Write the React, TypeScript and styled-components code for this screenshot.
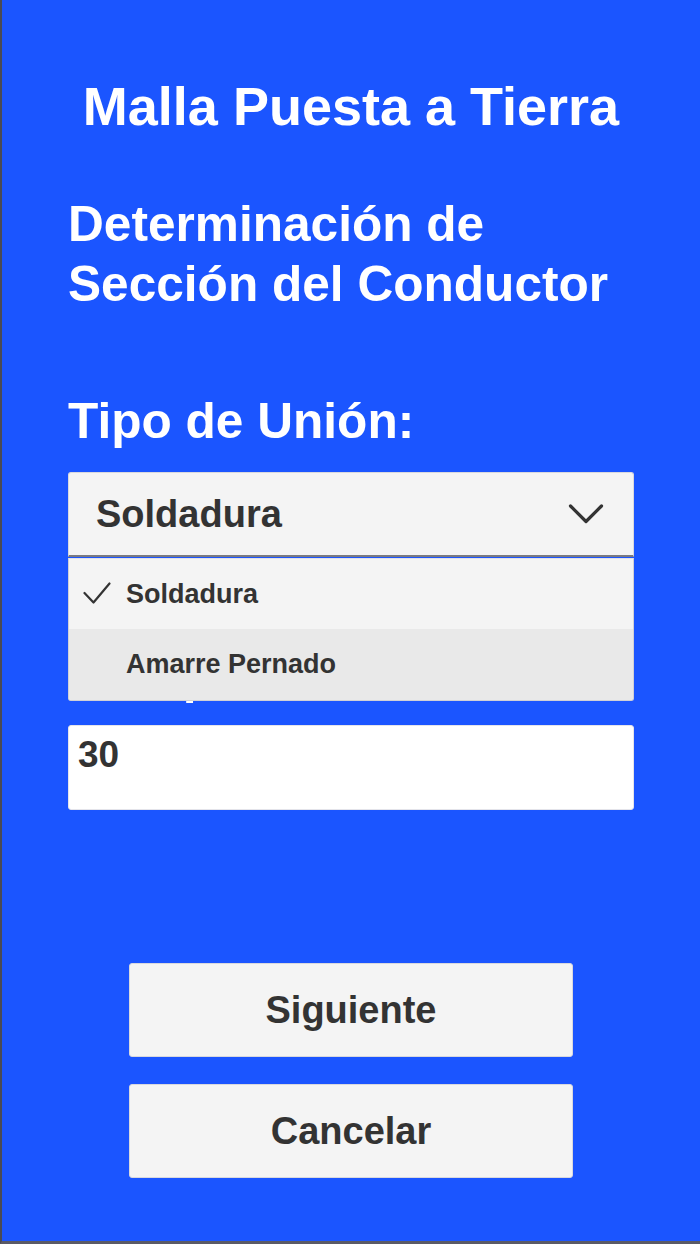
import React from "react";
import styled, { createGlobalStyle } from "styled-components";

const Global = createGlobalStyle`
  html, body { margin: 0; padding: 0; }
  body { font-family: "Liberation Sans", Arial, sans-serif; }
  * { box-sizing: border-box; }
`;

const Screen = styled.div`
  width: 700px;
  height: 1244px;
  background: #1b55ff;
  border-left: 2px solid #4a4a55;
  border-bottom: 3px solid #5a5a66;
  padding: 76px 66px 0 66px;
  display: flex;
  flex-direction: column;
  font-family: "Liberation Sans", Arial, sans-serif;
  font-weight: 700;
  overflow: hidden;
`;

const Title = styled.h1`
  margin: 0;
  font-size: 54px;
  line-height: 61px;
  color: #fff;
  text-align: center;
  font-weight: 700;
  white-space: nowrap;
`;

const Heading = styled.h2`
  margin: 57px 0 0 0;
  font-size: 49.6px;
  line-height: 60px;
  color: #fff;
  font-weight: 700;
`;

const Label = styled.div<{ $mt: number }>`
  margin-top: ${(p) => p.$mt}px;
  font-size: 49.6px;
  line-height: 60px;
  color: #fff;
  white-space: nowrap;
`;

const SelectWrap = styled.div`
  position: relative;
  margin-top: 21px;
`;

const SelectBox = styled.div`
  height: 85px;
  background: #f4f4f4;
  border: 1px solid #d8d8de;
  border-bottom: 2px solid #7a7a82;
  border-radius: 3px 3px 0 0;
  display: flex;
  align-items: center;
  justify-content: space-between;
  padding: 0 29px 0 27px;
  font-size: 38px;
  color: #333;
`;

const Menu = styled.div`
  position: absolute;
  left: 0;
  right: 0;
  top: 86px;
  background: #f4f4f4;
  border: 1px solid #d0d0d6;
  border-top: 1px solid #e2e2e6;
  border-radius: 0 0 3px 3px;
  overflow: hidden;
  z-index: 2;
`;

const Option = styled.div<{ $active?: boolean; $h: number }>`
  height: ${(p) => p.$h}px;
  display: flex;
  align-items: center;
  padding-left: 14px;
  font-size: 27px;
  color: #333;
  background: ${(p) => (p.$active ? "#e9e9e9" : "#f4f4f4")};
`;

const CheckSlot = styled.span`
  width: 43px;
  display: flex;
  align-items: center;
`;

const ValueField = styled.div`
  margin-top: 19px;
  height: 85px;
  background: #fff;
  border: 1px solid #e4e4ea;
  border-radius: 3px;
  padding: 8px 0 0 9px;
  font-size: 37px;
  line-height: 42px;
  color: #333;
`;

const Actions = styled.div`
  margin-top: 153px;
  display: flex;
  flex-direction: column;
  align-items: center;
  gap: 27px;
`;

const Button = styled.button`
  width: 444px;
  height: 94px;
  background: #f4f4f4;
  border: 1px solid #d8d8de;
  border-radius: 3px;
  font-family: "Liberation Sans", Arial, sans-serif;
  font-weight: 700;
  font-size: 38px;
  color: #333;
  padding: 0;
  cursor: pointer;
`;

const Chevron = () => (
  <svg width="36" height="22" viewBox="0 0 36 22" fill="none">
    <path d="M2.5 3 L18 18.5 L33.5 3" stroke="#333" strokeWidth="3.2" strokeLinecap="round" strokeLinejoin="round" />
  </svg>
);

const Check = () => (
  <svg width="28" height="24" viewBox="0 0 28 24" fill="none">
    <path d="M1.5 11 L10.5 20.5 L26.5 1.5" stroke="#333" strokeWidth="2.2" strokeLinecap="round" strokeLinejoin="round" />
  </svg>
);

export default function App() {
  return (
    <>
      <Global />
      <Screen>
        <Title>Malla Puesta a Tierra</Title>
        <Heading>
          Determinación de
          <br />
          Sección del Conductor
        </Heading>
        <Label $mt={77}>Tipo de Unión:</Label>
        <SelectWrap>
          <SelectBox>
            <span>Soldadura</span>
            <Chevron />
          </SelectBox>
          <Menu>
            <Option $h={70}>
              <CheckSlot>
                <Check />
              </CheckSlot>
              Soldadura
            </Option>
            <Option $h={71} $active>
              <CheckSlot />
              Amarre Pernado
            </Option>
          </Menu>
        </SelectWrap>
        <Label $mt={89}>Tiempo de Falla:</Label>
        <ValueField>30</ValueField>
        <Actions>
          <Button>Siguiente</Button>
          <Button>Cancelar</Button>
        </Actions>
      </Screen>
    </>
  );
}
